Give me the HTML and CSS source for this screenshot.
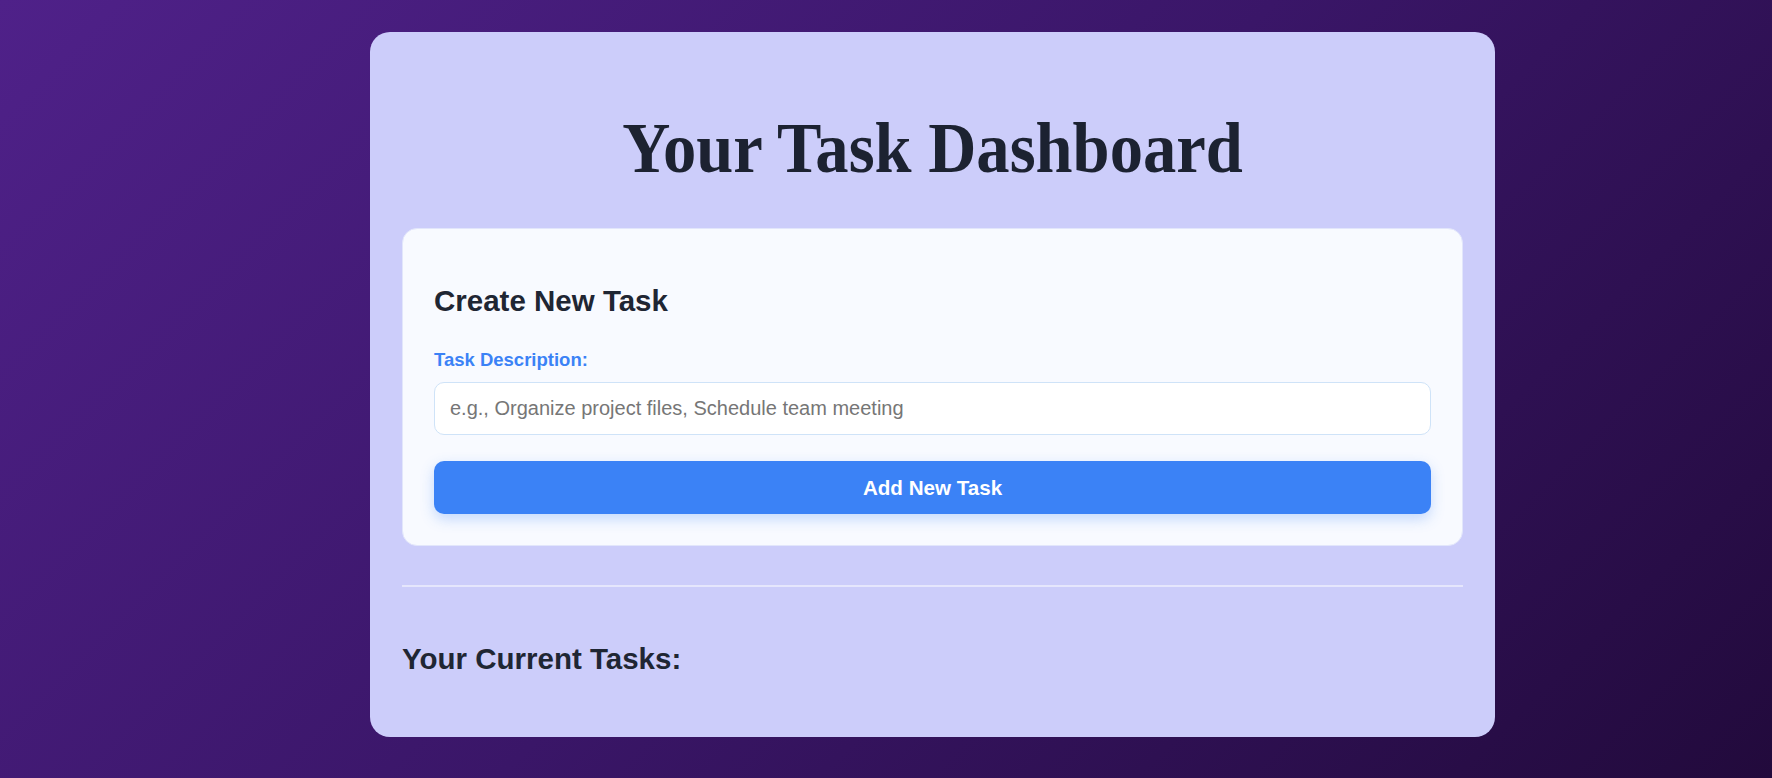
FILE: index.html
```html
<!DOCTYPE html>
<html lang="en">
<head>
<meta charset="utf-8">
<title>Your Task Dashboard</title>
<link rel="stylesheet" href="styles.css">
</head>
<body>
  <main class="dashboard">
    <h1 class="title"><span class="title-text">Your Task Dashboard</span></h1>
    <section class="create-card">
      <h2 class="section-title">Create New Task</h2>
      <label class="field-label" for="task">Task Description:</label>
      <input class="task-input" id="task" type="text" placeholder="e.g., Organize project files, Schedule team meeting">
      <button class="add-button" type="button">Add New Task</button>
    </section>
    <hr class="divider">
    <h2 class="section-title current-title">Your Current Tasks:</h2>
    <ul class="task-list"></ul>
  </main>
</body>
</html>
```
FILE: styles.css
```css
* { box-sizing: border-box; }

html, body { height: 100%; }

body {
  margin: 0;
  padding: 32px 0 41px 370px;
  background: linear-gradient(135deg, #4f2189 0%, #3a1668 50%, #220a3c 100%);
  font-family: "Liberation Sans", Arial, sans-serif;
  color: #1f2937;
  overflow: hidden;
}

.dashboard {
  width: 1125px;
  background: #cccdfa;
  border-radius: 20px;
  padding: 32px 32px 32px;
  display: flex;
  flex-direction: column;
}

.title {
  margin: 43px 0 38px;
  font-family: "Liberation Serif", "Times New Roman", serif;
  font-size: 72px;
  line-height: 83px;
  font-weight: 700;
  text-align: center;
  color: #1c2231;
}

.title-text {
  display: inline-block;
  transform: scaleX(0.925);
}

.create-card {
  background: #f8faff;
  border: 1px solid #e2e6fb;
  border-radius: 15px;
  padding: 30px 31px 31px;
  display: flex;
  flex-direction: column;
}

.section-title {
  margin: 25px 0 31px;
  font-size: 29.5px;
  line-height: 34px;
  font-weight: 700;
  color: #1f2633;
}

.field-label {
  font-size: 18.5px;
  line-height: 21px;
  font-weight: 700;
  color: #3b82f6;
  margin-bottom: 11.5px;
}

.task-input {
  height: 53.5px;
  width: 100%;
  padding: 0 15px;
  border: 1px solid #cfe3f8;
  border-radius: 10px;
  background: #ffffff;
  font-family: "Liberation Sans", Arial, sans-serif;
  font-size: 20px;
  color: #1f2937;
  outline: none;
}

.task-input::placeholder { color: #767676; }

.add-button {
  margin-top: 26px;
  height: 53px;
  width: 100%;
  border: none;
  border-radius: 10px;
  background: #3b82f6;
  color: #ffffff;
  font-family: "Liberation Sans", Arial, sans-serif;
  font-size: 20.6px;
  font-weight: 700;
  box-shadow: 0 5px 14px rgba(59, 130, 246, 0.28);
  cursor: pointer;
}

.divider {
  margin: 39px 0 0;
  border: none;
  height: 2px;
  background: #e5e6fc;
}

.current-title {
  margin: 55px 0 29px;
}

.task-list {
  margin: 0;
  padding: 0;
  list-style: none;
}
```
